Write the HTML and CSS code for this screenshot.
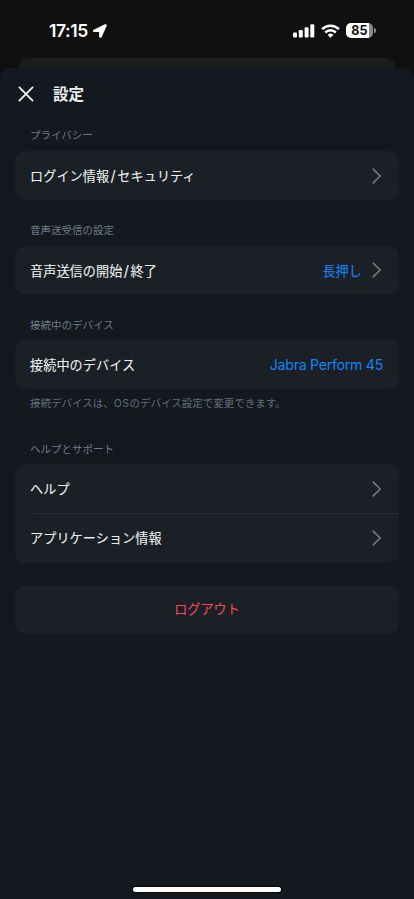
FILE: index.html
```html
<!DOCTYPE html>
<html lang="ja">
<head>
<meta charset="utf-8">
<meta name="viewport" content="width=device-width, initial-scale=1">
<title>設定</title>
<link rel="stylesheet" href="styles.css">
</head>
<body>
<svg class="defs" width="0" height="0" aria-hidden="true">
  <symbol id="chevron" viewBox="0 0 10 16"><path d="M1.2 1.1 8.2 8l-7 6.9" fill="none" stroke="currentColor" stroke-width="1.7" stroke-linecap="round" stroke-linejoin="round"/></symbol>
</svg>
<div class="status">
  <span class="time">17:15</span>
  <svg class="location" width="14" height="14" viewBox="0 0 14 14"><path d="M.9 6.2 12.2.8c.7-.3 1.2.2.9.9L8.2 12.7c-.3.8-1.5.6-1.5-.3V7.4H1.2C.4 7.4.2 6.5.9 6.2z" fill="#fff" stroke="#fff" stroke-width="1.1" stroke-linejoin="round"/></svg>
  <svg class="signal" width="22" height="14" viewBox="0 0 22 14" fill="#fff"><rect x="0" y="8.6" width="4" height="5" rx="1.1"/><rect x="5.8" y="6.1" width="4" height="7.5" rx="1.1"/><rect x="11.6" y="3.3" width="4" height="10.3" rx="1.1"/><rect x="17.3" y=".3" width="4" height="13.3" rx="1.1"/></svg>
  <svg class="wifi" width="19" height="14" viewBox="0 0 19 14" fill="none" stroke="#fff" stroke-width="2.5"><path d="M1.1 5.2a12 12 0 0 1 16.8 0"/><path d="M4.2 8.5a7.6 7.6 0 0 1 10.6 0"/><path d="M6.6 10.8a4.2 4.2 0 0 1 5.8 0L9.5 13.7z" fill="#fff" stroke="none"/></svg>
  <div class="battery"><span class="level">85</span></div>
</div>
<div class="behind"></div>
<main class="sheet">
  <header class="header">
    <svg class="close" width="16" height="16" viewBox="0 0 16 16"><path d="M1.4 1.4 14.6 14.6M14.6 1.4 1.4 14.6" stroke="#f4f5f6" stroke-width="1.8" stroke-linecap="round"/></svg>
    <h1 class="title">設定</h1>
  </header>

  <section class="section">
    <h2 class="label">プライバシー</h2>
    <div class="card">
      <div class="row"><span>ログイン情報<span class="slash">/</span>セキュリティ</span><svg class="chevron"><use href="#chevron"/></svg></div>
    </div>
  </section>

  <section class="section">
    <h2 class="label">音声送受信の設定</h2>
    <div class="card">
      <div class="row"><span>音声送信の開始<span class="slash">/</span>終了</span><span class="value">長押し</span><svg class="chevron"><use href="#chevron"/></svg></div>
    </div>
  </section>

  <section class="section">
    <h2 class="label">接続中のデバイス</h2>
    <div class="card">
      <div class="row"><span>接続中のデバイス</span><span class="value device">Jabra Perform 45</span></div>
    </div>
    <p class="note">接続デバイスは、<span class="os">OS</span>のデバイス設定で変更できます。</p>
  </section>

  <section class="section">
    <h2 class="label">ヘルプとサポート</h2>
    <div class="card">
      <div class="row"><span>ヘルプ</span><svg class="chevron"><use href="#chevron"/></svg></div>
      <div class="divider"></div>
      <div class="row"><span>アプリケーション情報</span><svg class="chevron"><use href="#chevron"/></svg></div>
    </div>
  </section>

  <div class="card logout">ログアウト</div>
  <div class="home"></div>
</main>
</body>
</html>
```
FILE: styles.css
```css
* { box-sizing: border-box; }
body {
  margin: 0;
  height: 899px;
  overflow: hidden;
  display: flex;
  flex-direction: column;
  background: #101010;
  color: #eceded;
  font-family: Inter, "Noto Sans CJK JP", sans-serif;
}
.defs { position: absolute; }
.status {
  height: 58px;
  flex: none;
  display: flex;
  align-items: center;
  padding: 3px 38px 0 49px;
}
.time { font-size: 17.5px; font-weight: 600; color: #fff; letter-spacing: -0.4px; width: 41px; white-space: nowrap; }
.location { margin-left: 3px; }
.signal { margin-left: auto; }
.wifi { margin-left: 6px; }
.battery {
  margin-left: 6px;
  display: flex;
  align-items: center;
}
.battery::after {
  content: "";
  width: 2px;
  height: 5px;
  margin-left: 1px;
  border-radius: 0 2px 2px 0;
  background: #8b8b8b;
}
.level {
  width: 27px;
  height: 15px;
  border-radius: 5px;
  background: linear-gradient(90deg, #fff 85%, #8b8b8b 85%);
  color: #111;
  font-size: 12.5px;
  font-weight: 700;
  line-height: 15px;
  letter-spacing: 0.2px;
  text-align: center;
}
.behind {
  height: 10px;
  flex: none;
  margin: 0 19px;
  border-radius: 9px 9px 0 0;
  background: #1b1c1e;
}
.sheet {
  flex: 1;
  display: flex;
  flex-direction: column;
  padding: 0 15px;
  border-radius: 10px 10px 0 0;
  background: #14181f;
}
.header { height: 52px; flex: none; display: flex; align-items: center; padding-left: 3px; }
.title { margin: 1px 0 0 19px; font-size: 15.5px; line-height: 20px; font-weight: 700; }
.section { margin-bottom: 14.4px; }
.label {
  height: 31px;
  margin: 0;
  padding: 0.4px 0 0 15px;
  font-size: 10.5px;
  line-height: 31px;
  font-weight: 400;
  color: #6f7c8a;
}
.card { border-radius: 10px; background: #1b1f26; }
.row {
  height: 49.2px;
  display: flex;
  align-items: center;
  padding: 0 16px 0 15px;
  font-size: 13.1px;
  letter-spacing: 0.1px;
  -webkit-text-stroke: 0.1px currentColor;
}
.slash { font-size: 14.5px; padding: 0 1.5px 0 1.3px; line-height: 1; }
.value { margin-left: auto; color: #1483f5; }
.chevron { width: 10px; height: 16px; color: #6c7987; margin: 0 1px 0 auto; }
.value + .chevron { margin-left: 10px; }
.device { font-size: 14.2px; letter-spacing: -0.3px; -webkit-text-stroke: 0; }
.note {
  height: 29px;
  margin: 0 0 0 15px;
  font-size: 10.5px;
  line-height: 29px;
  color: #626e7c;
}
.section:has(.note) { margin-bottom: 0; padding-bottom: 14.8px; }
.os { letter-spacing: 0.5px; }
.divider { height: 1px; margin: -0.5px 0 -0.5px 19px; background: #2b2f35; }
.logout {
  height: 49px;
  margin-top: 8.2px;
  line-height: 49px;
  text-align: center;
  font-size: 13.1px;
  -webkit-text-stroke: 0.1px currentColor;
  color: #ec4a5c;
}
.home {
  width: 148px;
  height: 5px;
  margin: auto auto 7px;
  border-radius: 3px;
  background: #fff;
  box-shadow: 0 0 1px 1px #07090c;
}
```
